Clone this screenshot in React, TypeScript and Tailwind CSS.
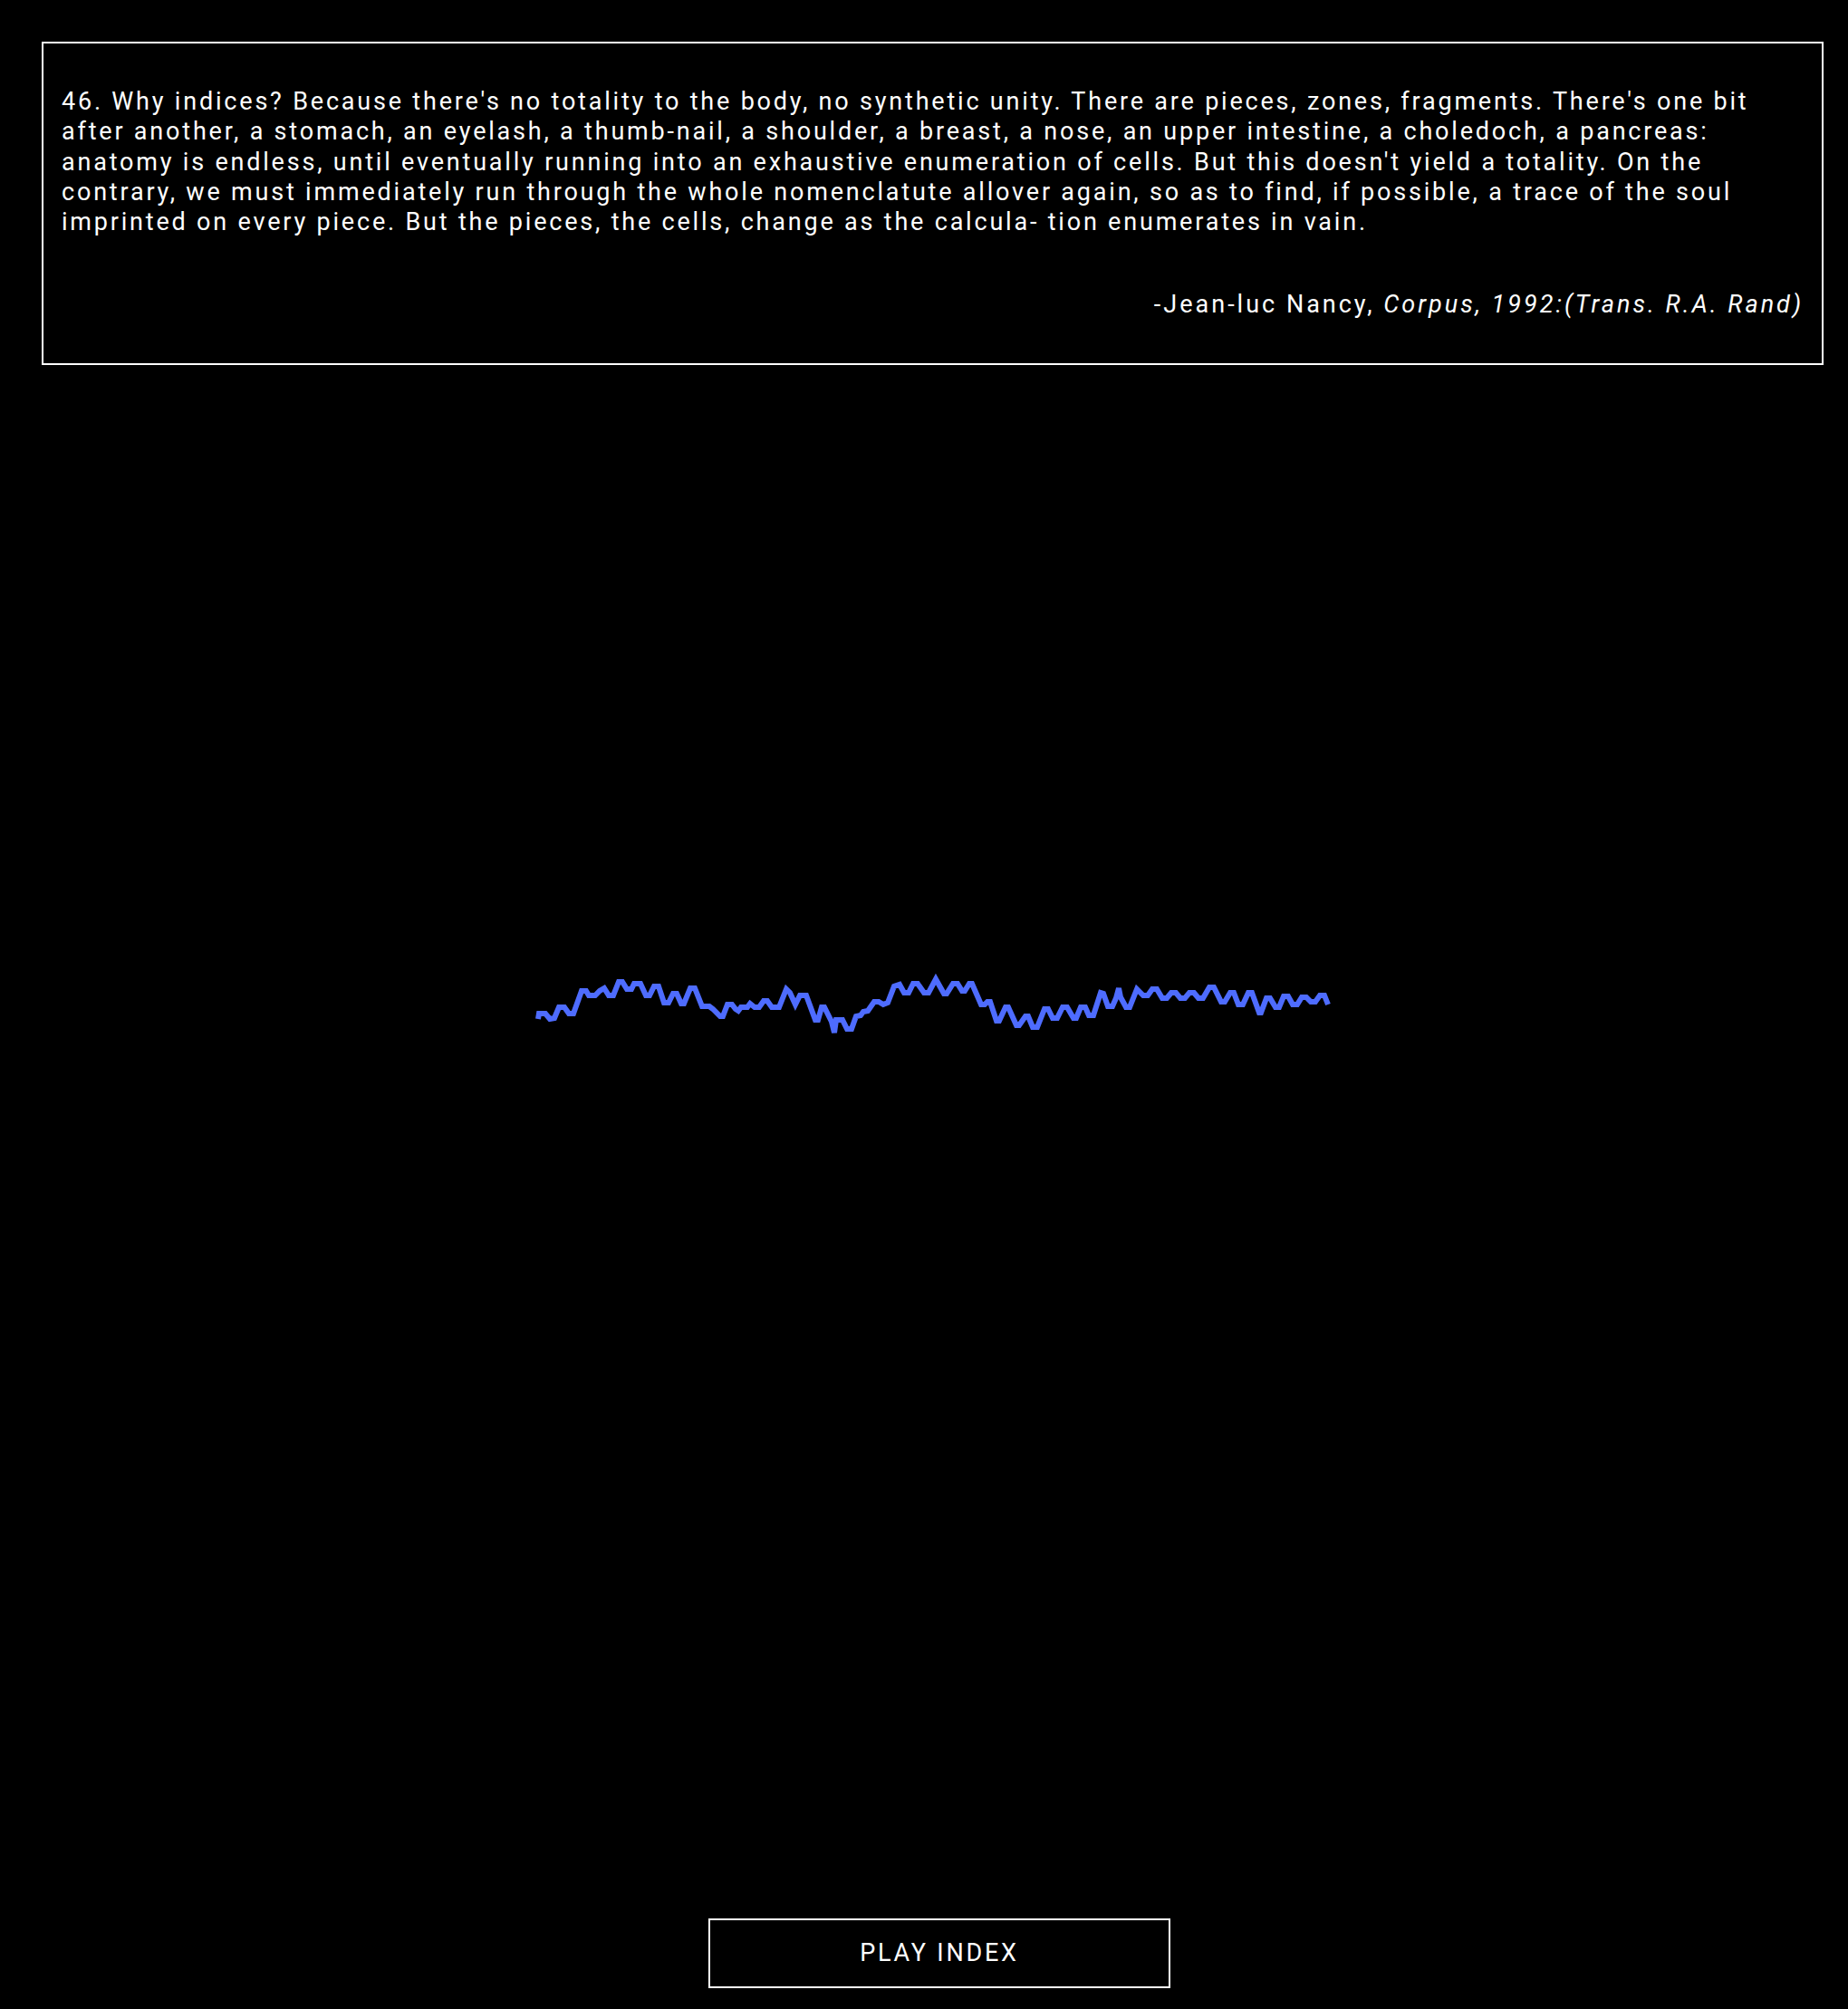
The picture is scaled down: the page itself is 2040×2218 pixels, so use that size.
import React from "react";

const wave: [number, number][] = [
  [594, 1126], [595, 1120], [602, 1120], [607, 1126], [612, 1125], [617, 1113], [623, 1113],
  [628, 1120], [633, 1120], [642, 1095], [647, 1095], [650, 1100], [657, 1100], [662, 1095],
  [667, 1092], [672, 1100], [677, 1100], [683, 1085], [687, 1085], [692, 1093], [697, 1093],
  [700, 1087], [707, 1087], [713, 1100], [717, 1100], [722, 1090], [727, 1090], [733, 1108],
  [738, 1108], [743, 1098], [747, 1098], [752, 1109], [755, 1109], [762, 1092], [767, 1092],
  [775, 1112], [783, 1112], [787, 1115], [795, 1123], [798, 1123], [803, 1110], [808, 1110],
  [812, 1115], [815, 1117], [818, 1113], [825, 1113], [828, 1109], [833, 1113], [838, 1113],
  [843, 1106], [847, 1106], [852, 1113], [860, 1113], [868, 1093], [872, 1097], [878, 1110],
  [883, 1100], [890, 1100], [900, 1127], [903, 1127], [907, 1113], [910, 1113], [918, 1129],
  [921, 1141], [923, 1127], [930, 1127], [935, 1137], [940, 1137], [945, 1123], [950, 1122],
  [953, 1118], [958, 1117], [965, 1107], [970, 1107], [975, 1110], [980, 1108], [987, 1090],
  [993, 1088], [998, 1097], [1003, 1097], [1008, 1087], [1013, 1087], [1020, 1097], [1025, 1097],
  [1033, 1082], [1042, 1098], [1045, 1098], [1052, 1087], [1057, 1087], [1062, 1095],
  [1065, 1095], [1070, 1087], [1073, 1087], [1083, 1110], [1087, 1110], [1090, 1107],
  [1093, 1107], [1100, 1128], [1103, 1128], [1110, 1113], [1113, 1113], [1122, 1133],
  [1125, 1133], [1132, 1123], [1135, 1123], [1140, 1135], [1145, 1135], [1153, 1115],
  [1157, 1115], [1162, 1125], [1167, 1125], [1173, 1113], [1178, 1113], [1185, 1125],
  [1188, 1125], [1193, 1113], [1198, 1113], [1202, 1122], [1207, 1122], [1215, 1097],
  [1218, 1098], [1223, 1112], [1228, 1112], [1232, 1103], [1235, 1092], [1237, 1102],
  [1243, 1113], [1247, 1113], [1255, 1093], [1262, 1100], [1267, 1100], [1272, 1093],
  [1277, 1093], [1283, 1103], [1288, 1103], [1293, 1097], [1298, 1097], [1303, 1103],
  [1308, 1103], [1313, 1097], [1318, 1097], [1323, 1103], [1328, 1103], [1335, 1091],
  [1340, 1091], [1348, 1107], [1352, 1107], [1358, 1097], [1362, 1097], [1367, 1110],
  [1372, 1110], [1378, 1097], [1382, 1097], [1390, 1119], [1392, 1119], [1398, 1103],
  [1402, 1103], [1408, 1113], [1412, 1113], [1417, 1101], [1422, 1101], [1427, 1110],
  [1432, 1110], [1437, 1102], [1442, 1102], [1447, 1107], [1452, 1107], [1457, 1100],
  [1462, 1100], [1466, 1110],
];

const X0 = 585;
const Y0 = 1070;

const Waveform = () => {
  const d = wave
    .map(([x, y], i) => `${i === 0 ? "M" : "L"}${x - X0} ${y - Y0}`)
    .join(" ");
  return (
    <svg width={890} height={80} viewBox="0 0 890 80" className="block ml-[585px]">
      <path d={d} fill="none" stroke="#4e6cff" strokeWidth={6} strokeLinejoin="miter" strokeLinecap="butt" />
    </svg>
  );
};

const App = () => {
  return (
    <div
      className="w-full h-[2218px] bg-black text-white flex flex-col overflow-hidden"
      style={{ fontFamily: "Roboto, 'Liberation Sans', sans-serif" }}
    >
      <div className="ml-[46px] mt-[46px] w-[1967px] h-[357px] border-2 border-white px-[20px] pt-[48px]">
        <p className="text-[27px] leading-[33.25px] tracking-[2.8px]">
          46. Why indices? Because there's no totality to the body, no synthetic unity. There are
          pieces, zones, fragments. There's one bit after another, a stomach, an eyelash, a
          thumb-nail, a shoulder, a breast, a nose, an upper intestine, a choledoch, a pancreas:
          anatomy is endless, until eventually running into an exhaustive enumeration of cells. But
          this doesn't yield a totality. On the contrary, we must immediately run through the whole
          nomenclatute allover again, so as to find, if possible, a trace of the soul imprinted on
          every piece. But the pieces, the cells, change as the calcula- tion enumerates in vain.
        </p>
        <p className="mt-[58px] text-right text-[27px] leading-[33.25px] tracking-[3px]">
          -Jean-luc Nancy, <em>Corpus, 1992:(Trans. R.A. Rand)</em>
        </p>
      </div>

      <div className="mt-[666px]">
        <Waveform />
      </div>

      <div className="mt-[969px]">
        <button className="ml-[782px] w-[510px] h-[77px] border-2 border-white bg-black text-white text-[27px] tracking-[2.8px] flex items-center justify-center">
          PLAY INDEX
        </button>
      </div>
    </div>
  );
};

export default App;
